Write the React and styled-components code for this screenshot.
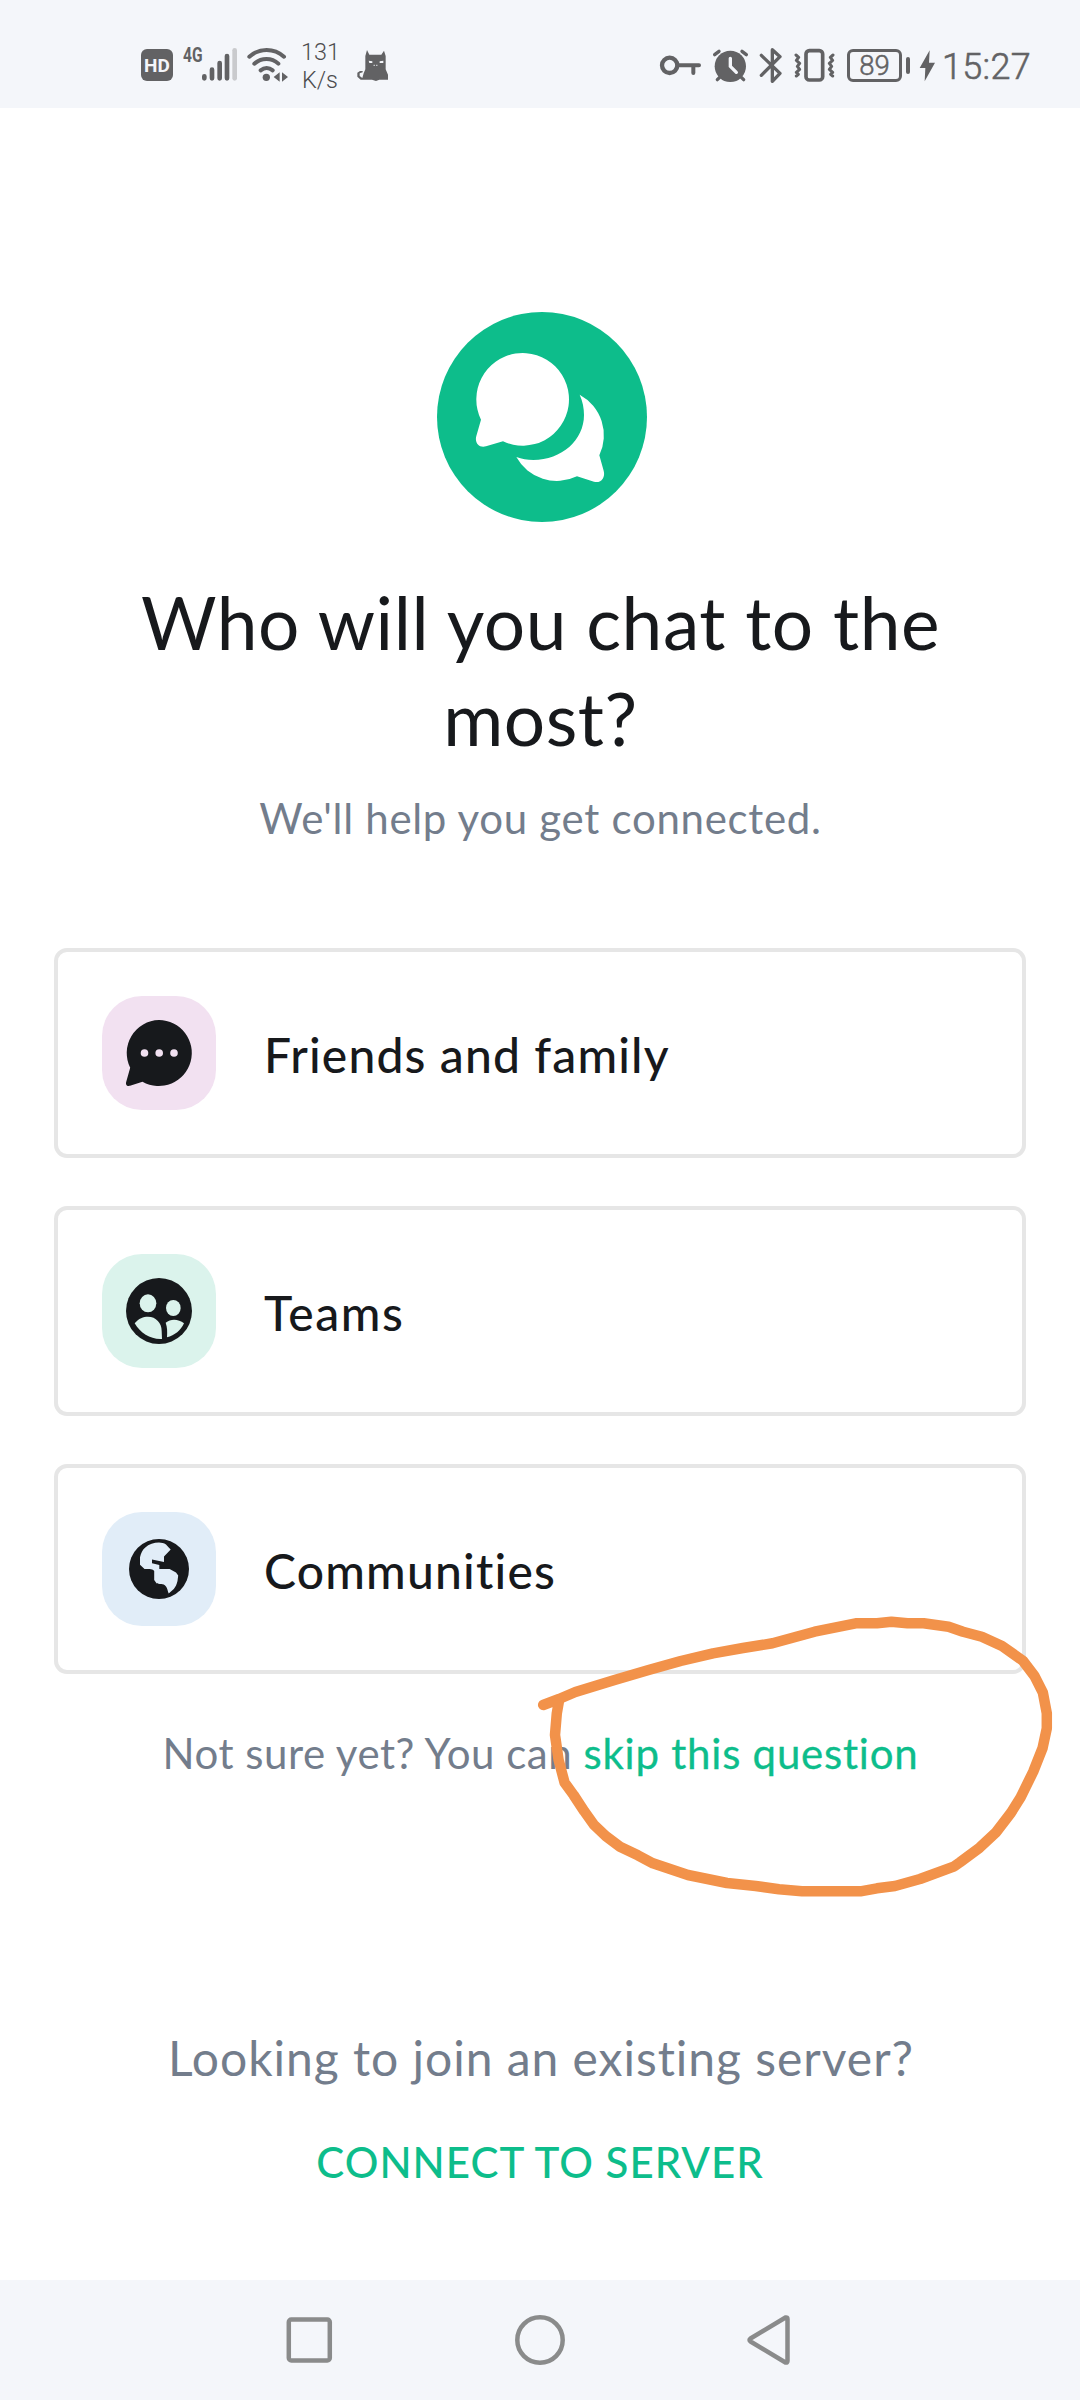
import React from "react";
import styled, { createGlobalStyle } from "styled-components";

const GlobalStyle = createGlobalStyle`
  * { box-sizing: border-box; }
  body { margin: 0; background: #fff; font-family: "Lato", "Liberation Sans", sans-serif; }
  svg { display: block; flex: none; }
`;

const ink = "#17191c";
const muted = "#737d8c";
const accent = "#0dbd8b";
const statusInk = "#626264";

const Screen = styled.div`
  width: 1080px;
  height: 2400px;
  display: flex;
  flex-direction: column;
  background: #fff;
  overflow: hidden;
`;

const StatusBar = styled.header`
  flex: none;
  height: 108px;
  padding: 45px 50px 23px 141px;
  display: flex;
  justify-content: space-between;
  background: #f4f6fa;
  color: ${statusInk};
  font-family: "Roboto", "Liberation Sans", sans-serif;
`;

const StatusGroup = styled.div`
  display: flex;
  align-items: center;
  height: 40px;
`;

const HdBadge = styled.span`
  width: 32px;
  height: 32px;
  border-radius: 6px;
  background: ${statusInk};
  color: #f4f6fa;
  font-size: 19px;
  font-weight: 700;
  line-height: 33px;
  text-align: center;
`;

const NetworkType = styled.span`
  width: 18px;
  margin-left: 10px;
  align-self: flex-start;
  font-size: 21px;
  font-weight: 700;
  line-height: 21px;
  white-space: nowrap;
  transform: scaleX(0.74);
  transform-origin: left;
`;

const Speed = styled.span`
  width: 38px;
  margin: 0 17px 0 12px;
  padding-top: 1px;
  font-size: 23.4px;
  font-weight: 300;
  line-height: 28px;
  text-align: center;
  color: #4c4c4e;
`;

const Battery = styled.span`
  width: 55px;
  height: 33px;
  margin-left: 12px;
  border: 3px solid ${statusInk};
  border-radius: 6px;
  font-size: 27.5px;
  font-weight: 300;
  -webkit-text-stroke: 0.5px ${statusInk};
  line-height: 28px;
  text-align: center;
`;

const BatteryCap = styled.span`
  width: 4px;
  height: 17px;
  margin: 0 9px 0 4px;
  border-radius: 2px;
  background: ${statusInk};
`;

const Clock = styled.time`
  width: 88px;
  margin-left: 7px;
  font-size: 36px;
  font-weight: 300;
  -webkit-text-stroke: 0.6px ${statusInk};
  line-height: 40px;
  padding-top: 4px;
  letter-spacing: 0.3px;
`;

const Gap = styled.span`
  width: ${(p) => p.$w}px;
  flex: none;
`;

const Content = styled.main`
  flex: 1;
  display: flex;
  flex-direction: column;
  align-items: center;
  padding: 204px 54px 0;
`;

const Logo = styled.svg`
  width: 210px;
  height: 210px;
  margin-left: 4px;
`;

const Title = styled.h1`
  width: 860px;
  margin: 52px 0 0 1px;
  color: ${ink};
  font-size: 73px;
  font-weight: 400;
  line-height: 96px;
  letter-spacing: 0.55px;
  text-align: center;
`;

const Subtitle = styled.p`
  margin: 22px 0 0 1px;
  color: ${muted};
  font-size: 42px;
  line-height: 60px;
  letter-spacing: 0.7px;
`;

const Options = styled.div`
  width: 100%;
  margin-top: 100px;
  display: flex;
  flex-direction: column;
  gap: 48px;
`;

const Option = styled.button`
  width: 100%;
  height: 210px;
  padding: 0 44px;
  display: flex;
  align-items: center;
  gap: 48px;
  border: 4px solid #e6e6e6;
  border-radius: 13px;
  background: #fff;
  color: ${ink};
  font: 500 48px/60px "Lato", "Liberation Sans", sans-serif;
  letter-spacing: ${(p) => p.$tracking}px;
  text-align: left;
`;

const Tile = styled.span`
  width: 114px;
  height: 114px;
  flex: none;
  display: flex;
  align-items: center;
  justify-content: center;
  border-radius: 40px;
  background: ${(p) => p.$tint};
`;

const OptionLabel = styled.span`
  padding-top: 4px;
`;

const Hint = styled.p`
  margin: 49px 0 0 1px;
  color: ${muted};
  font-size: 42px;
  line-height: 60px;
  letter-spacing: 0.53px;
  white-space: nowrap;
`;

const SkipLink = styled.a`
  color: ${accent};
  letter-spacing: 0.77px;
  -webkit-text-stroke: 0.3px ${accent};
`;

const ServerPrompt = styled.p`
  margin: 242px 0 0 2px;
  color: ${muted};
  font-size: 48px;
  line-height: 66px;
  letter-spacing: 0.97px;
`;

const ServerButton = styled.button`
  margin-top: 41px;
  padding: 0;
  border: 0;
  background: none;
  color: ${accent};
  font: 500 42px/60px "Lato", "Liberation Sans", sans-serif;
  letter-spacing: 1.03px;
`;

const NavBar = styled.nav`
  flex: none;
  height: 120px;
  padding: 0 284px 0 281px;
  display: flex;
  align-items: center;
  justify-content: space-between;
  background: #f4f6fa;
`;

const Annotation = styled.svg`
  position: absolute;
  left: 520px;
  top: 1590px;
  pointer-events: none;
`;

const SignalIcon = () => (
  <svg width="38" height="40" viewBox="243 75 114 120" stroke={statusInk} strokeWidth="14" strokeLinecap="round">
    <path d="M253 169V175M276 149V175M299 129V175M321 108V175" />
    <path d="M344 91V175" stroke="#c9cacd" />
  </svg>
);

const WifiIcon = () => (
  <svg width="43" height="40" viewBox="378 75 129 120" fill="none" stroke={statusInk} strokeWidth="12" strokeLinecap="round">
    <path d="M388 110C418 83 462 83 492 110M403 131C424 112 455 112 475 131M422 151C433 142 447 142 458 151" />
    <circle cx="439" cy="172" r="11" fill={statusInk} stroke="none" />
    <path d="M461 171L479 157V185ZM486 157L504 171L486 185Z" fill={statusInk} stroke="none" />
  </svg>
);

const CatIcon = () => (
  <svg width="34" height="40" viewBox="708 75 102 120">
    <path
      fill={statusInk}
      d="M741 90L748 104H784L792 92L797 108V148L804 164V179H778L768 183L756 179H722L712 170V158L720 153H728V157L719 160V168L727 174L731 160L736 148V108Z"
    />
    <path fill="#f4f6fa" d="M746 122L757 124V129H748ZM779 124L790 122V129H779ZM761 134H764V138H761ZM769 134H772V138H769Z" />
  </svg>
);

const KeyIcon = () => (
  <svg width="43" height="40" viewBox="54 75 129 120" fill="none" stroke={statusInk} strokeWidth="12" strokeLinecap="round">
    <circle cx="86" cy="136" r="23" strokeWidth="13" />
    <path d="M110 136H174M157 138V159" />
  </svg>
);

const AlarmIcon = () => (
  <svg width="37" height="40" viewBox="213 75 111 120" fill="none" stroke={statusInk} strokeWidth="10" strokeLinecap="round">
    <circle cx="268" cy="139" r="47" fill={statusInk} stroke="none" />
    <path d="M221 104L234 94M303 94L316 104M236 172L229 179M301 172L308 179" />
    <path d="M268 115V139L286 157" stroke="#f4f6fa" />
  </svg>
);

const BluetoothIcon = () => (
  <svg width="24" height="40" viewBox="354 75 72 120" fill="none" stroke={statusInk} strokeWidth="10" strokeLinecap="round" strokeLinejoin="round">
    <path d="M361 106L417 160L394 184V89L417 110L361 166" />
  </svg>
);

const VibrateIcon = () => (
  <svg width="41" height="40" viewBox="459 75 123 120" fill="none" stroke={statusInk} strokeLinecap="round" strokeLinejoin="round">
    <rect x="495" y="92" width="50" height="88" rx="10" strokeWidth="11" />
    <path strokeWidth="9" d="M465 105L473 112L466 121L476 130L469 139L476 148L466 157L472 163L466 168M576 105L568 112L575 121L565 130L572 139L565 148L575 157L569 163L575 168" />
  </svg>
);

const BoltIcon = () => (
  <svg width="16" height="40" viewBox="832 75 48 120">
    <path fill={statusInk} d="M864 91L834 144H851L849 184L880 128H862Z" />
  </svg>
);

const ChatIcon = () => (
  <svg width="66" height="66" viewBox="0 0 66 66">
    <path fill={ink} d="M33 0A33 33 0 1 1 16.5 61.7L4 65.8C1.2 66.5 -.5 64.8 .1 62.3L4.2 47.7A33 33 0 0 1 33 0Z" />
    <g fill="#f2e1f1">
      <circle cx="18.5" cy="33" r="3.8" />
      <circle cx="33.2" cy="33" r="3.8" />
      <circle cx="48" cy="33" r="3.8" />
    </g>
  </svg>
);

const TeamIcon = () => (
  <svg width="66" height="66" viewBox="0 0 198 198">
    <circle cx="99" cy="99" r="99" fill={ink} />
    <g fill="#dbf3ec">
      <ellipse cx="66" cy="76" rx="25" ry="27" />
      <ellipse cx="142" cy="90" rx="22" ry="24" />
      <path d="M26 136C38 121 52 116 66 116C90 116 107 135 107 158L108 183C74 185 44 166 26 136Z" />
      <path d="M119 134C135 121 158 123 174 136C165 156 146 173 123 178C124 160 124 148 119 134Z" />
    </g>
  </svg>
);

const GlobeIcon = () => (
  <svg width="60" height="60" viewBox="0 0 60 60">
    <circle cx="30" cy="30" r="30" fill={ink} />
    <path
      fill="#e1edf8"
      d="M30 3.6C32.5 3.6 35 4.3 37 5.5C38.5 7 40 9 41.7 10.5L35 17.5V23L23 20.5V24.3L30.3 26V30H40.6L47 33.5L49.2 36.5L48.5 42C47.8 45 46.5 48 44.8 50L39.7 54.5C38.7 52 38.4 49.5 37 47.5C35.5 45.5 34 45.2 32.4 45C30 45 28.5 44.8 27.5 44.2L25.2 41V32C24 30.5 22.5 30.2 20.7 30H15.5L11 25.7V18.3C12 14 13.5 11 16 8.7C20 5 25 3.6 30 3.6Z"
    />
  </svg>
);

const options = [
  { label: "Friends and family", tint: "#f2e1f1", Icon: ChatIcon, tracking: 1.15 },
  { label: "Teams", tint: "#dbf3ec", Icon: TeamIcon, tracking: 1.6 },
  { label: "Communities", tint: "#e1edf8", Icon: GlobeIcon, tracking: 1.2 },
];

export default function App() {
  return (
    <Screen>
      <GlobalStyle />
      <StatusBar>
        <StatusGroup>
          <HdBadge>HD</HdBadge>
          <NetworkType>4G</NetworkType>
          <SignalIcon />
          <Gap $w={7} />
          <WifiIcon />
          <Speed>131 K/s</Speed>
          <CatIcon />
        </StatusGroup>
        <StatusGroup>
          <KeyIcon />
          <Gap $w={10} />
          <AlarmIcon />
          <Gap $w={10} />
          <BluetoothIcon />
          <Gap $w={11} />
          <VibrateIcon />
          <Battery>89</Battery>
          <BatteryCap />
          <BoltIcon />
          <Clock>15:27</Clock>
        </StatusGroup>
      </StatusBar>

      <Content>
        <Logo viewBox="51 36 630 630">
          <circle cx="366" cy="351" r="315" fill={accent} />
          <g fill="#fff">
            <path d="M183 359A139 139 0 1 1 249 424L198 439C178 445 163 429 169 408Z" />
            <path d="M479 284A139 139 0 0 1 538 466L551 512C557 533 542 551 522 545L471 529A139 139 0 0 1 289 471C305 477 322 480 340 480C425 480 492 420 492 345C492 325 488 303 479 284Z" />
          </g>
        </Logo>
        <Title>Who will you chat to the most?</Title>
        <Subtitle>We'll help you get connected.</Subtitle>

        <Options>
          {options.map(({ label, tint, Icon, tracking }) => (
            <Option key={label} $tracking={tracking}>
              <Tile $tint={tint}>
                <Icon />
              </Tile>
              <OptionLabel>{label}</OptionLabel>
            </Option>
          ))}
        </Options>

        <Hint>
          Not sure yet? You can <SkipLink>skip this question</SkipLink>
        </Hint>
        <ServerPrompt>Looking to join an existing server?</ServerPrompt>
        <ServerButton>CONNECT TO SERVER</ServerButton>
      </Content>

      <NavBar>
        <svg width="56" height="56" viewBox="0 0 56 56" fill="none" stroke="#8a8b8b" strokeWidth="4.5">
          <rect x="7.8" y="7.5" width="41" height="41" rx="2.5" />
        </svg>
        <svg width="56" height="56" viewBox="0 0 56 56" fill="none" stroke="#8a8b8b" strokeWidth="4.5">
          <circle cx="29" cy="28" r="22.7" />
        </svg>
        <svg width="56" height="56" viewBox="0 0 56 56" fill="none" stroke="#8a8b8b" strokeWidth="4.5" strokeLinejoin="round">
          <path d="M10.5 26.5L45.5 5.5Q47.5 5 47.5 7V49Q47.5 51 45.5 50.5L10.5 29.5Q8.5 28 10.5 26.5Z" />
        </svg>
      </NavBar>

      <Annotation width="560" height="330" viewBox="0 0 560 330" fill="none" stroke="#f2924a" strokeWidth="10.5" strokeLinecap="round" strokeLinejoin="round">
        <polyline points="23.2,115 39,109 55.4,102 94.6,90 128.6,80 160.7,71 193,63.3 223,58 252.5,53.3 294.6,41.7 335.7,33.3 357,33.3 371.4,31.7 387.5,33.3 403.6,33.3 428.6,36.7 443,41.7 461.8,46.7 482,56 502.9,70.7 514.3,85.7 522.9,102.7 526.8,123.3 526.8,138.3 522.5,158.3 513.2,181.7 500.7,207.3 491,222.7 475.7,242.7 459.6,257.7 440,272.3 434.3,276.3 400,289 375,296 357,298.3 340.4,301.3 282,301.3 259,299.3 235.7,296 207,293 187.5,289 167.9,285 132.9,273.3 117.9,265.3 100,256.7 85.7,246 73.9,234.7 64.3,221.3 53.6,205 44.6,192.7 38.6,170 35,145 36.8,123.3 39.3,109" />
      </Annotation>
    </Screen>
  );
}
